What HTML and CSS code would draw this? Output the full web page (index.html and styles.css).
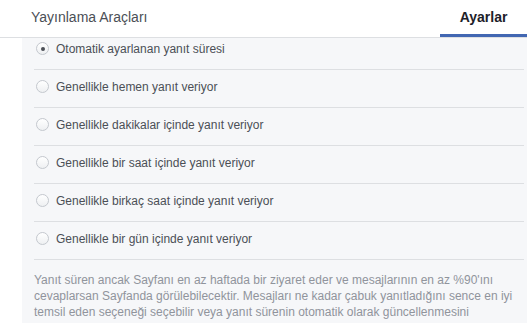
FILE: index.html
```html
<!DOCTYPE html>
<html lang="tr">
<head>
<meta charset="utf-8">
<title>Ayarlar</title>
<link rel="stylesheet" href="styles.css">
</head>
<body>
<header class="tabs">
  <div class="tab">Yayınlama Araçları</div>
  <div class="tab tab-active">Ayarlar</div>
</header>
<main class="page">
  <section class="panel">
    <ul class="options">
      <li class="option option-first"><span class="radio radio-checked"></span><span class="label">Otomatik ayarlanan yanıt süresi</span></li>
      <li class="option"><span class="radio"></span><span class="label">Genellikle hemen yanıt veriyor</span></li>
      <li class="option"><span class="radio"></span><span class="label">Genellikle dakikalar içinde yanıt veriyor</span></li>
      <li class="option"><span class="radio"></span><span class="label">Genellikle bir saat içinde yanıt veriyor</span></li>
      <li class="option"><span class="radio"></span><span class="label">Genellikle birkaç saat içinde yanıt veriyor</span></li>
      <li class="option"><span class="radio"></span><span class="label">Genellikle bir gün içinde yanıt veriyor</span></li>
    </ul>
    <p class="note">Yanıt süren ancak Sayfanı en az haftada bir ziyaret eder ve mesajlarının en az %90'ını cevaplarsan Sayfanda görülebilecektir. Mesajları ne kadar çabuk yanıtladığını sence en iyi temsil eden seçeneği seçebilir veya yanıt sürenin otomatik olarak güncellenmesini sağlayabilirsin.</p>
  </section>
</main>
</body>
</html>
```

FILE: styles.css
```css
html, body {
  margin: 0;
  padding: 0;
  height: 100%;
  overflow: hidden;
  background: #ffffff;
  font-family: "Liberation Sans", Arial, sans-serif;
}

.tabs {
  display: flex;
  height: 37px;
  border-bottom: 1px solid #dddfe2;
  background: #ffffff;
}

.tab {
  flex: 1;
  box-sizing: border-box;
  height: 37px;
  padding: 9px 0 0 31px;
  font-size: 14px;
  line-height: 16px;
  color: #4b4f56;
}

.tab-active {
  flex: none;
  width: 87px;
  padding-left: 0;
  text-align: center;
  font-weight: bold;
  color: #1d2129;
  border-bottom: 3px solid #4267b2;
}

.page {
  height: 285px;
  overflow: hidden;
}

.panel {
  margin-left: 22px;
  height: 100%;
  box-sizing: border-box;
  padding: 0 3px 0 12px;
  background: #f6f7f9;
  overflow: hidden;
}

.options {
  list-style: none;
  margin: 0;
  padding: 0;
}

.option {
  display: flex;
  align-items: flex-start;
  gap: 7px;
  padding: 9px 0 12px 2px;
  font-size: 12px;
  line-height: 16px;
  color: #4b4f56;
  border-bottom: 1px solid #dddfe2;
}

.option-first {
  padding-top: 3px;
}

.radio {
  flex: none;
  display: flex;
  align-items: center;
  justify-content: center;
  width: 13px;
  height: 13px;
  box-sizing: border-box;
  margin-top: 1px;
  border: 1px solid #c4c8ce;
  border-radius: 50%;
  background: linear-gradient(#ffffff, #eef0f2);
}

.radio-checked::after {
  content: "";
  width: 4px;
  height: 4px;
  border-radius: 50%;
  background: #4b4f56;
}

.note {
  margin: 0;
  padding-top: 12px;
  font-size: 12px;
  line-height: 16px;
  color: #90949c;
}
```
